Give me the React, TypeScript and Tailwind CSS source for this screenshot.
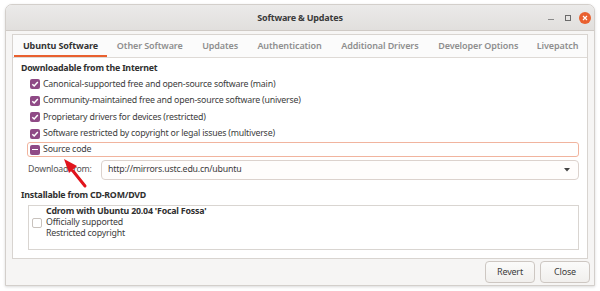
import { useState } from "react";

const font = { fontFamily: '"Noto Sans", "DejaVu Sans", sans-serif' };

const tabs = [
  { label: "Ubuntu Software", w: "w-[93px]" },
  { label: "Other Software", w: "w-[86px]" },
  { label: "Updates", w: "w-[55px]" },
  { label: "Authentication", w: "w-[84px]" },
  { label: "Additional Drivers", w: "w-[97px]" },
  { label: "Developer Options", w: "w-[100px]" },
  { label: "Livepatch", w: "w-[59px]" },
];

const sources = [
  "Canonical-supported free and open-source software (main)",
  "Community-maintained free and open-source software (universe)",
  "Proprietary drivers for devices (restricted)",
  "Software restricted by copyright or legal issues (multiverse)",
];

const CheckBox = ({ state }: { state: "on" | "mixed" | "off" }) => {
  if (state === "off") {
    return <span className="block shrink-0 w-[10px] h-[10px] rounded-[2px] border border-[#c8c2bd] bg-white" />;
  }
  return (
    <span className="flex shrink-0 items-center justify-center w-[10px] h-[10px] rounded-[2px] bg-[#8f4a86]">
      {state === "on" ? (
        <svg width="8" height="8" viewBox="0 0 8 8">
          <path d="M1.3 4.2 L3.2 6 L6.8 2" fill="none" stroke="#fff" strokeWidth="1.5" />
        </svg>
      ) : (
        <span className="block w-[6px] h-[1.6px] bg-white" />
      )}
    </span>
  );
};

export default function App() {
  const [active] = useState(0);
  return (
    <div
      className="w-[600px] h-[291px] bg-white overflow-hidden text-[#3c3c3c] text-[8.8px] tracking-[-0.2px]"
      style={font}
    >
      <div className="relative ml-[5px] mt-[4px] w-[590px] h-[282px] rounded-t-[7px] border border-[#d3cfcb] bg-[#f6f5f4] flex flex-col overflow-hidden shadow-[0_1px_3px_rgba(0,0,0,0.15)]">
        {/* title bar */}
        <div className="relative h-[26px] shrink-0 flex items-center justify-center bg-gradient-to-b from-[#ebeae9] to-[#e1dfdd] border-b border-[#cfcac5]">
          <span className="text-[9px] font-bold text-[#3a3a3a]">Software &amp; Updates</span>
          <div className="absolute right-[3px] top-0 h-full flex items-center">
            <span className="block w-[6px] h-[1px] bg-[#8a8a8a] mt-[3px]" />
            <span className="block ml-[11px] w-[6px] h-[6px] border border-[#6a6a6a]" />
            <span className="flex ml-[8px] items-center justify-center w-[12px] h-[12px] rounded-full bg-[#e9602f]">
              <svg width="6" height="6" viewBox="0 0 6 6">
                <path d="M1 1 L5 5 M5 1 L1 5" stroke="#fff" strokeWidth="1.2" />
              </svg>
            </span>
          </div>
        </div>

        {/* notebook */}
        <div className="mx-[6px] mt-[3px] h-[225px] border border-[#d8d4d0] bg-white flex flex-col">
          <div className="h-[23px] shrink-0 flex pl-[1px] border-b border-[#dedad6] bg-[#fbfbfb]">
            {tabs.map((t, i) => (
              <div
                key={t.label}
                className={`${t.w} h-full flex items-center justify-center text-[9px] tracking-[-0.1px] ${
                  i === active
                    ? "font-bold text-[#333] border-b-2 border-[#e9602f] pt-[2px]"
                    : "font-semibold text-[#8e8e8e]"
                }`}
              >
                {t.label}
              </div>
            ))}
          </div>

          <div className="flex flex-col px-[8px] pt-[4px]">
            <div className="h-[14px] flex items-center font-bold text-[#2f2f2f]">Downloadable from the Internet</div>
            <div className="flex flex-col">
              {sources.map((s) => (
                <div key={s} className="h-[16.5px] flex items-center gap-[3px] pl-[9px]">
                  <CheckBox state="on" />
                  <span>{s}</span>
                </div>
              ))}
              <div className="h-[15px] ml-[6px] flex items-center gap-[3px] pl-[2px] rounded-[3px] border border-[#f1b49e] bg-white">
                <CheckBox state="mixed" />
                <span>Source code</span>
              </div>
            </div>

            <div className="mt-[3px] h-[20px] flex items-center ml-[7px]">
              <span className="w-[73px] text-[#555]">Download from:</span>
              <div className="flex-1 h-full flex items-center justify-between pl-[6px] pr-[8px] rounded-[4px] border border-[#dcd2cd] bg-[#fffdfc]">
                <span>http://mirrors.ustc.edu.cn/ubuntu</span>
                <svg width="6" height="4" viewBox="0 0 6 4">
                  <path d="M0 0 L6 0 L3 3.5 Z" fill="#444" />
                </svg>
              </div>
            </div>

            <div className="mt-[9px] h-[14px] flex items-center font-bold text-[#2f2f2f]">Installable from CD-ROM/DVD</div>
            <div className="mt-[2px] ml-[7px] h-[45px] border border-[#d9d5d1] bg-white flex items-start pl-[3px]">
              <div className="flex items-center">
                <CheckBox state="off" />
                <div className="ml-[4px] flex flex-col">
                  <span className="block h-[11px] leading-[11px] font-bold text-[#2f2f2f]">Cdrom with Ubuntu 20.04 'Focal Fossa'</span>
                  <span className="block h-[11px] leading-[11px]">Officially supported</span>
                  <span className="block h-[11px] leading-[11px]">Restricted copyright</span>
                </div>
              </div>
            </div>
          </div>
        </div>

        {/* buttons */}
        <div className="flex justify-end gap-[5px] pr-[4px] mt-[2px]">
          <button className="w-[50px] h-[22px] rounded-[4px] border border-[#cdc7c2] bg-gradient-to-b from-[#fbfbfa] to-[#f1efed] text-[9px] text-[#3c3c3c]">
            Revert
          </button>
          <button className="w-[50px] h-[22px] rounded-[4px] border border-[#cdc7c2] bg-gradient-to-b from-[#fbfbfa] to-[#f1efed] text-[9px] text-[#3c3c3c]">
            Close
          </button>
        </div>

        {/* red arrow annotation */}
        <svg className="absolute left-[46px] top-[148px]" width="40" height="40" viewBox="0 0 40 40">
          <path d="M33 33 L21 18" stroke="#e1141c" strokeWidth="3" strokeLinecap="round" />
          <path d="M12 6 L25 13 L17 20 Z" fill="#e1141c" />
        </svg>
      </div>
    </div>
  );
}
